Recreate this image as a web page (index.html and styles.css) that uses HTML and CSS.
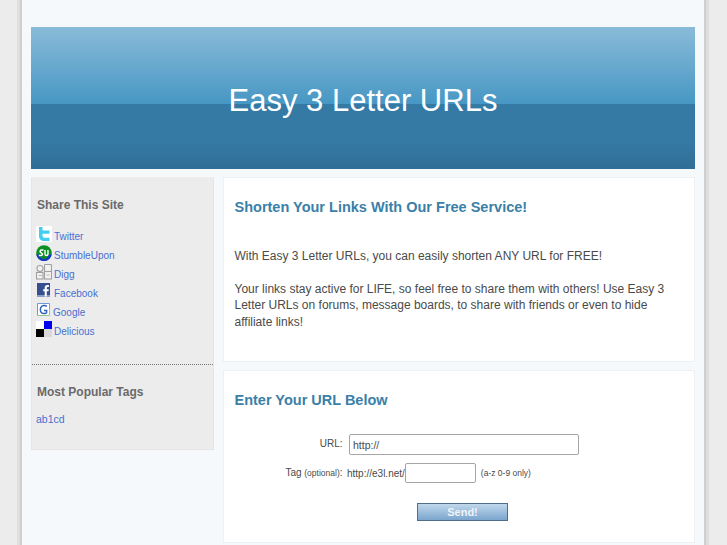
FILE: index.html
```html
<!DOCTYPE html>
<html lang="en">

<head>
    <meta charset="UTF-8">
    <meta name="viewport" content="width=device-width, initial-scale=1.0">
    <title>Easy 3 Letter URLs</title>
    <link rel="stylesheet" href="styles.css">
</head>

<body>
    <div class="wrapper">
        <header class="banner">
            <h1>Easy 3 Letter URLs</h1>
        </header>
        <div class="columns">
            <aside class="sidebar">
                <section class="side-block share">
                    <h3>Share This Site</h3>
                    <ul class="share-list">
                        <li>
                            <svg class="icon" viewBox="0 0 16 16"><rect width="16" height="16" fill="#fff"/><path d="M3 1h3.500v3.500h7v3.200h-7v1.800c0 1.500 1 2.300 2.400 2.300h4.600v3.200H8.500C5 15 3 13 3 10z" fill="#43cdf0"/></svg>
                            <a href="#">Twitter</a>
                        </li>
                        <li>
                            <svg class="icon" viewBox="0 0 16 16"><circle cx="8" cy="8" r="7.800" fill="#0c8f22"/><path d="M0.300 9.500A7.800 7.800 0 0 0 15.700 9.500H12.500A4.500 4.500 0 0 1 3.500 9.500z" fill="#1338c8"/><path d="M2.800 10.500h2c1 0 1.700-.6 1.700-1.500S4 7.500 4 6.500 4.800 5 5.800 5h1.700M9 5v4c0 1 .7 1.500 1.500 1.500S12 10 12 9V5" fill="none" stroke="#fff" stroke-width="1.400"/></svg>
                            <a href="#">StumbleUpon</a>
                        </li>
                        <li>
                            <svg class="icon" viewBox="0 0 16 16"><g fill="#f2f2f2" stroke="#a0a0a0" stroke-width="1.100"><circle cx="4" cy="4.500" r="3"/><rect x="8.500" y="0.500" width="7" height="7" rx="1"/><rect x="0.500" y="8.500" width="6.500" height="6.500"/><rect x="8.500" y="7.500" width="7" height="7.500"/></g><path d="M2.500 11.500h3.500M10.500 11h3" stroke="#b8b8b8"/></svg>
                            <a href="#">Digg</a>
                        </li>
                        <li>
                            <svg class="icon" viewBox="0 0 16 16"><rect x="1" y="0" width="13" height="13.500" fill="#36508f"/><rect x="1" y="12" width="13" height="1.500" fill="#8b9dc3"/><path d="M8.700 13.500V8.200H7.200V6.200h1.500V4.600C8.700 3 9.700 2 11.200 2h1.700v2h-1.100c-.7 0-1 .3-1 .9v1.300h2l-.3 2h-1.700v5.300z" fill="#fff"/></svg>
                            <a href="#">Facebook</a>
                        </li>
                        <li>
                            <svg class="icon icon-google" viewBox="0 0 16 16"><rect x="1.500" y="1.500" width="12" height="12" fill="#fff"/><path d="M1.500 13.500V1.500H13.500" fill="none" stroke="#6f9ad8"/><path d="M13.500 1.500v5.500" stroke="#e07a6a"/><path d="M1.500 13.500h12V7" fill="none" stroke="#8fc98f"/><path d="M10.700 4.500C9.500 3 5.500 3 4.600 6s.4 5.500 3.200 5.500c1.400 0 2.800-.5 2.800-1V8.500H8" fill="none" stroke="#2f5fc0" stroke-width="1.500"/></svg>
                            <a href="#">Google</a>
                        </li>
                        <li>
                            <svg class="icon" viewBox="0 0 16 16"><rect width="16" height="16" fill="#fff"/><rect x="8" width="8" height="8" fill="#0000f0"/><rect y="8" width="8" height="8" fill="#000"/><rect x="8" y="8" width="8" height="8" fill="#d8d8d8"/></svg>
                            <a href="#">Delicious</a>
                        </li>
                    </ul>
                </section>
                <section class="side-block tags">
                    <h3>Most Popular Tags</h3>
                    <p><a href="#">ab1cd</a></p>
                </section>
            </aside>
            <main class="content">
                <section class="box intro">
                    <h2>Shorten Your Links With Our Free Service!</h2>
                    <p class="lead">With Easy 3 Letter URLs, you can easily shorten ANY URL for FREE!</p>
                    <p>Your links stay active for LIFE, so feel free to share them with others! Use Easy 3 Letter URLs on forums, message boards, to share with friends or even to hide affiliate links!</p>
                </section>
                <section class="box enter">
                    <h2>Enter Your URL Below</h2>
                    <form class="url-form">
                        <div class="row row-url">
                            <label class="field-label">URL:</label>
                            <input class="input input-url" type="text" value="http://">
                        </div>
                        <div class="row row-tag">
                            <label class="field-label">Tag <small>(optional)</small>:</label>
                            <span class="prefix">http://e3l.net/</span>
                            <input class="input input-tag" type="text">
                            <small class="hint">(a-z 0-9 only)</small>
                        </div>
                        <button class="send" type="button">Send!</button>
                    </form>
                </section>
            </main>
        </div>
    </div>
</body>

</html>
```

FILE: styles.css
```css
html {
    box-sizing: border-box;
    font-family: "Liberation Sans", Arial, sans-serif;
    font-size: 12px;
}

*,
*:before,
*:after {
    box-sizing: inherit;
}

body {
    margin: 0;
    height: 545px;
    overflow: hidden;
    background-color: #ececec;
    color: #4a4a4a;
}

a {
    color: #4a6fd0;
    text-decoration: none;
}

.wrapper {
    width: 686px;
    height: 545px;
    margin-left: 20px;
    padding: 27px 9px 0;
    background-color: #f5f9fc;
    border-left: 2px solid #cfcfcf;
    border-right: 2px solid #cfcfcf;
    box-shadow: 0 0 0 3px #dedede;
    overflow: hidden;
}

.banner {
    height: 142px;
    padding-top: 6px;
    display: flex;
    align-items: center;
    justify-content: center;
    background: linear-gradient(#8abbd9 0%, #4797c4 54%, #357aa5 54%, #357aa5 80%, #2f6e96 100%);
}

.banner h1 {
    margin: 0;
    font-size: 31px;
    font-weight: normal;
    color: #fff;
}

.columns {
    display: flex;
    gap: 9px;
    margin-top: 8px;
}

.sidebar {
    width: 183px;
    height: 273px;
    background-color: #ececec;
    border: 1px solid #e8e4e4;
    border-top-color: #eee;
}

.side-block h3 {
    margin: 0;
    font-size: 12px;
    color: #6a6a6a;
}

.share {
    height: 187px;
    padding: 20px 5px 0;
    border-bottom: 1px dotted #777;
}

.share-list {
    list-style: none;
    margin: 11px 0 0 -1px;
    padding: 0;
}

.share-list li {
    display: flex;
    align-items: flex-end;
    height: 19px;
    font-size: 10px;
}

.icon {
    width: 16px;
    height: 16px;
    margin-right: 2px;
    flex-shrink: 0;
}

.icon-google {
    margin-right: 1px;
}

.tags {
    padding: 20px 5px 0;
}

.tags p {
    margin: 14px 0 0 -1px;
    font-size: 10.500px;
}

.content {
    width: 472px;
}

.box {
    background-color: #fff;
    border: 1px solid #eef1f3;
    padding: 0 10.500px;
}

.box h2 {
    margin: 0;
    font-size: 14.500px;
    color: #3a80a8;
}

.box p {
    margin: 0;
    line-height: 16.500px;
}

.intro {
    height: 185px;
    padding-top: 21px;
}

.intro .lead {
    margin: 33px 0 16px;
}

.enter {
    height: 173px;
    margin-top: 8px;
    padding-top: 21px;
}

.url-form {
    margin-top: 26px;
}

.row {
    display: flex;
    align-items: center;
}

.field-label {
    width: 108px;
    text-align: right;
    font-size: 10px;
    margin-right: 6.500px;
    position: relative;
    top: -1px;
}

.field-label small {
    font-size: 8.500px;
}

.input {
    height: 21px;
    padding: 0 3px;
    font-family: inherit;
    font-size: 10.500px;
    color: #4a4a4a;
    background: #fff;
    border: 1px solid #a6a6a6;
    border-radius: 2px;
}

.input-url {
    width: 230px;
}

.row-tag {
    margin-top: 8px;
}

.row-tag .field-label {
    margin-right: 4.500px;
}

.prefix {
    font-size: 10px;
}

.input-tag {
    width: 71px;
    height: 20px;
}

.hint {
    margin-left: 5px;
    font-size: 8.500px;
}

.send {
    display: block;
    width: 91px;
    height: 18px;
    margin: 20px 0 0 182.500px;
    padding: 0;
    font-family: inherit;
    font-size: 11px;
    font-weight: bold;
    color: #eef3f8;
    background: linear-gradient(#c0d8ec, #7ba5cd);
    border: 1px solid #4d6f8c;
}
```
